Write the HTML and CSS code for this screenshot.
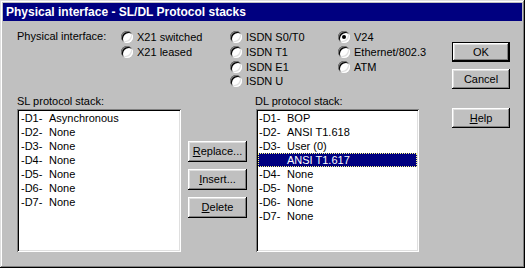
FILE: index.html
```html
<!DOCTYPE html>
<html lang="en">
<head>
  <meta charset="UTF-8" />
  <title>Physical interface - SL/DL Protocol stacks</title>
  <link rel="stylesheet" href="styles.css">
</head>
<body>
  <div class="window">
    <div class="titlebar">Physical interface - SL/DL Protocol stacks</div>
    <div class="dialog">
      <div class="main">
        <div class="iface">
          <div class="iface-label">Physical interface:</div>
          <div class="radio-col col1">
            <label class="radio-item"><span class="radio"></span>X21 switched</label>
            <label class="radio-item"><span class="radio"></span>X21 leased</label>
          </div>
          <div class="radio-col col2">
            <label class="radio-item"><span class="radio"></span>ISDN S0/T0</label>
            <label class="radio-item"><span class="radio"></span>ISDN T1</label>
            <label class="radio-item"><span class="radio"></span>ISDN E1</label>
            <label class="radio-item"><span class="radio"></span>ISDN U</label>
          </div>
          <div class="radio-col col3">
            <label class="radio-item"><span class="radio checked"></span>V24</label>
            <label class="radio-item"><span class="radio"></span>Ethernet/802.3</label>
            <label class="radio-item"><span class="radio"></span>ATM</label>
          </div>
        </div>

        <div class="stacks">
          <div class="stack sl">
            <div class="stack-label">SL protocol stack:</div>
            <ul class="listbox">
              <li><span class="lvl">-D1-</span>Asynchronous</li>
              <li><span class="lvl">-D2-</span>None</li>
              <li><span class="lvl">-D3-</span>None</li>
              <li><span class="lvl">-D4-</span>None</li>
              <li><span class="lvl">-D5-</span>None</li>
              <li><span class="lvl">-D6-</span>None</li>
              <li><span class="lvl">-D7-</span>None</li>
            </ul>
          </div>
          <div class="stack-buttons">
            <button class="btn"><u>R</u>eplace...</button>
            <button class="btn"><u>I</u>nsert...</button>
            <button class="btn"><u>D</u>elete</button>
          </div>
          <div class="stack dl">
            <div class="stack-label">DL protocol stack:</div>
            <ul class="listbox">
              <li><span class="lvl">-D1-</span>BOP</li>
              <li><span class="lvl">-D2-</span>ANSI T1.618</li>
              <li><span class="lvl">-D3-</span>User (0)</li>
              <li class="selected"><span class="lvl"></span>ANSI T1.617</li>
              <li><span class="lvl">-D4-</span>None</li>
              <li><span class="lvl">-D5-</span>None</li>
              <li><span class="lvl">-D6-</span>None</li>
              <li><span class="lvl">-D7-</span>None</li>
            </ul>
          </div>
        </div>
      </div>

      <div class="side">
        <button class="btn default">OK</button>
        <button class="btn">Cancel</button>
        <button class="btn help"><u>H</u>elp</button>
      </div>
    </div>
  </div>
</body>
</html>
```

FILE: styles.css
```css
html, body {
  margin: 0;
  padding: 0;
  background: #c0c0c0;
}
body {
  font-family: "Liberation Sans", Arial, sans-serif;
  font-size: 11px;
  color: #000;
}
.window {
  width: 525px;
  height: 268px;
  box-sizing: border-box;
  padding: 3px;
  background: #c0c0c0;
  box-shadow: inset -1px -1px #000, inset 1px 1px #dfdfdf,
              inset -2px -2px #808080, inset 2px 2px #fff;
}
.titlebar {
  height: 18px;
  line-height: 18px;
  padding-left: 3px;
  background: #000080;
  color: #fff;
  font-weight: bold;
  font-size: 12px;
}
.dialog {
  display: flex;
  padding: 9px 0 0 14px;
}
.main {
  width: 402px;
  flex: none;
}

/* physical interface radios */
.iface {
  display: flex;
}
.iface-label {
  flex: none;
  width: 104px;
  line-height: 14.7px;
  margin-top: -1px;
}
.radio-col {
  flex: none;
  display: flex;
  flex-direction: column;
}
.col1 { width: 109px; }
.col2 { width: 108px; }
.radio-item {
  display: flex;
  align-items: center;
  height: 14.7px;
  white-space: nowrap;
}
.radio {
  flex: none;
  position: relative;
  width: 12px;
  height: 12px;
  margin-right: 4px;
  border-radius: 50%;
  background: #fff;
  box-shadow: inset 1px 1px #808080, inset -1px -1px #fff,
              inset 2px 2px #000, inset -2px -2px #dfdfdf;
}
.radio.checked::after {
  content: "";
  position: absolute;
  left: 4px;
  top: 4px;
  width: 4px;
  height: 4px;
  border-radius: 50%;
  background: #000;
}

/* protocol stacks */
.stacks {
  display: flex;
  margin-top: 5px;
}
.stack {
  flex: none;
}
.stack-label {
  line-height: 14.7px;
}
.sl { width: 164px; }
.dl { width: 163px; margin-left: 9px; }
.dl .stack-label { margin-left: -1px; }
.listbox {
  list-style: none;
  margin: 1px 0 0;
  padding: 2px;
  height: 143px;
  box-sizing: border-box;
  background: #fff;
  box-shadow: inset 1px 1px #808080, inset -1px -1px #fff,
              inset 2px 2px #000, inset -2px -2px #dfdfdf;
}
.listbox li {
  height: 14px;
  line-height: 14px;
  padding-left: 2px;
  white-space: nowrap;
}
.dl .listbox li {
  padding-left: 1px;
}
.lvl {
  display: inline-block;
  width: 28px;
}
.listbox li.selected {
  background: #000080;
  color: #fff;
  outline: 1px dotted #ffff80;
  outline-offset: -1px;
}
.stack-buttons {
  flex: none;
  display: flex;
  flex-direction: column;
  gap: 7px;
  width: 59px;
  margin-left: 7px;
  padding-top: 47px;
}

/* buttons */
.btn {
  display: block;
  width: 59px;
  height: 21px;
  padding: 0;
  border: none;
  background: #c0c0c0;
  font: inherit;
  color: #000;
  box-shadow: inset -1px -1px #000, inset 1px 1px #fff,
              inset -2px -2px #808080, inset 2px 2px #dfdfdf;
}
.btn.default {
  border: 1px solid #000;
}
.side {
  flex: none;
  display: flex;
  flex-direction: column;
  gap: 7px;
  margin-left: 33px;
  padding-top: 12px;
}
.side .btn {
  width: 58px;
  height: 20px;
}
.side .help {
  margin-top: 12px;
}
```
